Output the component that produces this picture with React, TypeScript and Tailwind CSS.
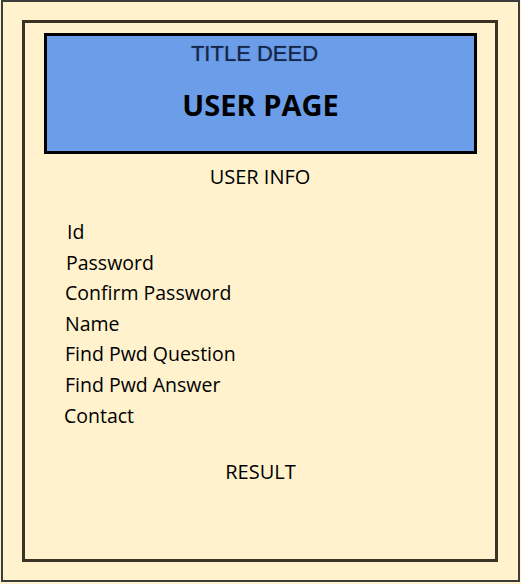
export default function App() {
  const fields = [
    { label: "Id", ml: "ml-[42px]" },
    { label: "Password", ml: "ml-[41px]" },
    { label: "Confirm Password", ml: "ml-[40px]" },
    { label: "Name", ml: "ml-[40px]" },
    { label: "Find Pwd Question", ml: "ml-[40px]" },
    { label: "Find Pwd Answer", ml: "ml-[40px]" },
    { label: "Contact", ml: "ml-[39px]" },
  ];
  return (
    <div
      className="w-[521px] h-[584px] bg-[#fff2cd] pl-[1px] pr-[1px] pb-[2px]"
      style={{ fontFamily: '"Open Sans", sans-serif' }}
    >
      <div className="w-full h-full border-2 border-[#3c3c3c] pt-[18px] pl-[19px] pr-[20px] pb-[18px]">
        <div className="w-full h-full border-[3px] border-[#3b3226]">
          <div className="mt-[10px] ml-[19px] w-[433px] h-[121px] bg-[#6b9de9] border-[3px] border-black flex flex-col items-center">
            <div
              className="mt-[3px] mr-[12px] text-[22px] leading-[30px] text-[#15264a]"
              style={{ fontFamily: '"Liberation Sans", Arial, sans-serif', textShadow: "0 0 1px rgba(20,40,80,0.6)" }}
            >
              TITLE DEED
            </div>
            <div className="mt-[18px] text-[29px] leading-[36px] font-bold text-black">USER PAGE</div>
          </div>
          <div className="mt-[10px] text-center text-[20px] leading-[26px] text-black">USER INFO</div>
          <div className="mt-[27px] flex flex-col text-[19.5px] leading-[30.6px] text-black">
            {fields.map((f) => (
              <div key={f.label} className={f.ml}>
                {f.label}
              </div>
            ))}
          </div>
          <div className="mt-[28px] text-center text-[20px] leading-[26px] text-black pl-[1px]">RESULT</div>
        </div>
      </div>
    </div>
  );
}
